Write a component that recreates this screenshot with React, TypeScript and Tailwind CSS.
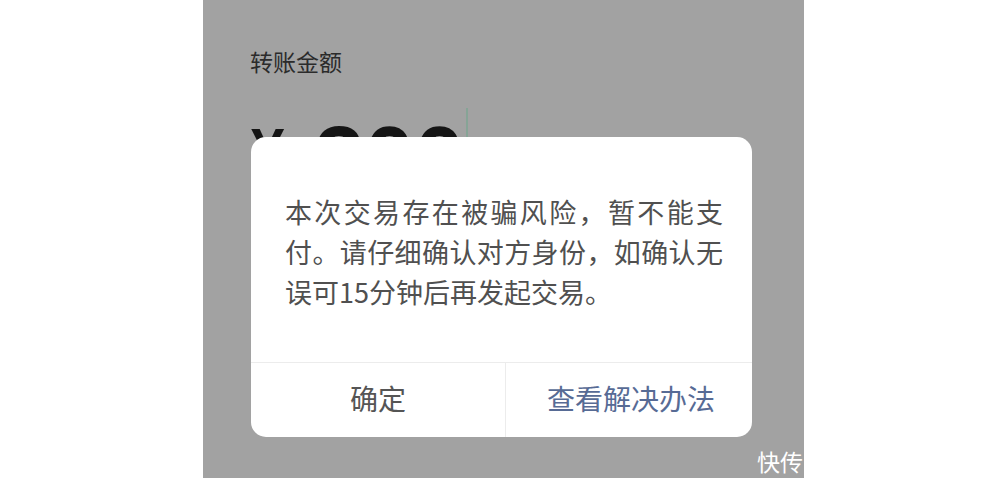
import React from "react";

const cjk = { fontFamily: '"Noto Sans CJK SC", "Noto Sans", sans-serif' };

export default function App() {
  return (
    <div className="w-[1000px] h-[478px] bg-white flex overflow-hidden" style={cjk}>
      <div className="ml-[203px] w-[601px] h-[478px] bg-[#a2a2a2] relative">
        <div className="pl-[47px] pt-[44px] text-[23px] leading-[34px] text-[#2b2b2b]">转账金额</div>
        <div className="flex items-start pl-[48px] mt-[36px]" style={{ fontFamily: '"Liberation Sans", Arial, sans-serif' }}>
          <span className="mt-[6px] text-[60px] leading-none font-bold text-[#151515]">¥</span>
          <span className="ml-[30px] text-[90px] leading-none font-bold text-[#151515]">300</span>
          <span className="ml-[1px] mt-[-6px] w-[2px] h-[60px] bg-[#86a496]" />
        </div>

        <div className="absolute left-[48px] top-[137px] w-[501px] h-[300px] bg-white rounded-[15px] flex flex-col overflow-hidden">
          <div className="flex-1 pl-[34px] pt-[55px]">
            <p
              className="w-[438px] text-[27px] leading-[40px] text-[#505050] text-justify"
              style={{ lineBreak: "strict" }}
            >
              本次交易存在被骗风险，暂不能支付。请仔细确认对方身份，如确认无误可15分钟后再发起交易。
            </p>
          </div>
          <div className="h-[75px] flex border-t border-[#ececec]">
            <div className="w-[255px] pb-[4px] flex items-center justify-center text-[28px] text-[#555555] border-r border-[#ececec]">
              确定
            </div>
            <div className="flex-1 pb-[4px] pl-[4px] flex items-center justify-center text-[28px] text-[#576b95]">
              查看解决办法
            </div>
          </div>
        </div>

        <div className="absolute right-[1px] top-[445px] text-[23px] leading-[32px] text-white">快传</div>
      </div>
    </div>
  );
}
